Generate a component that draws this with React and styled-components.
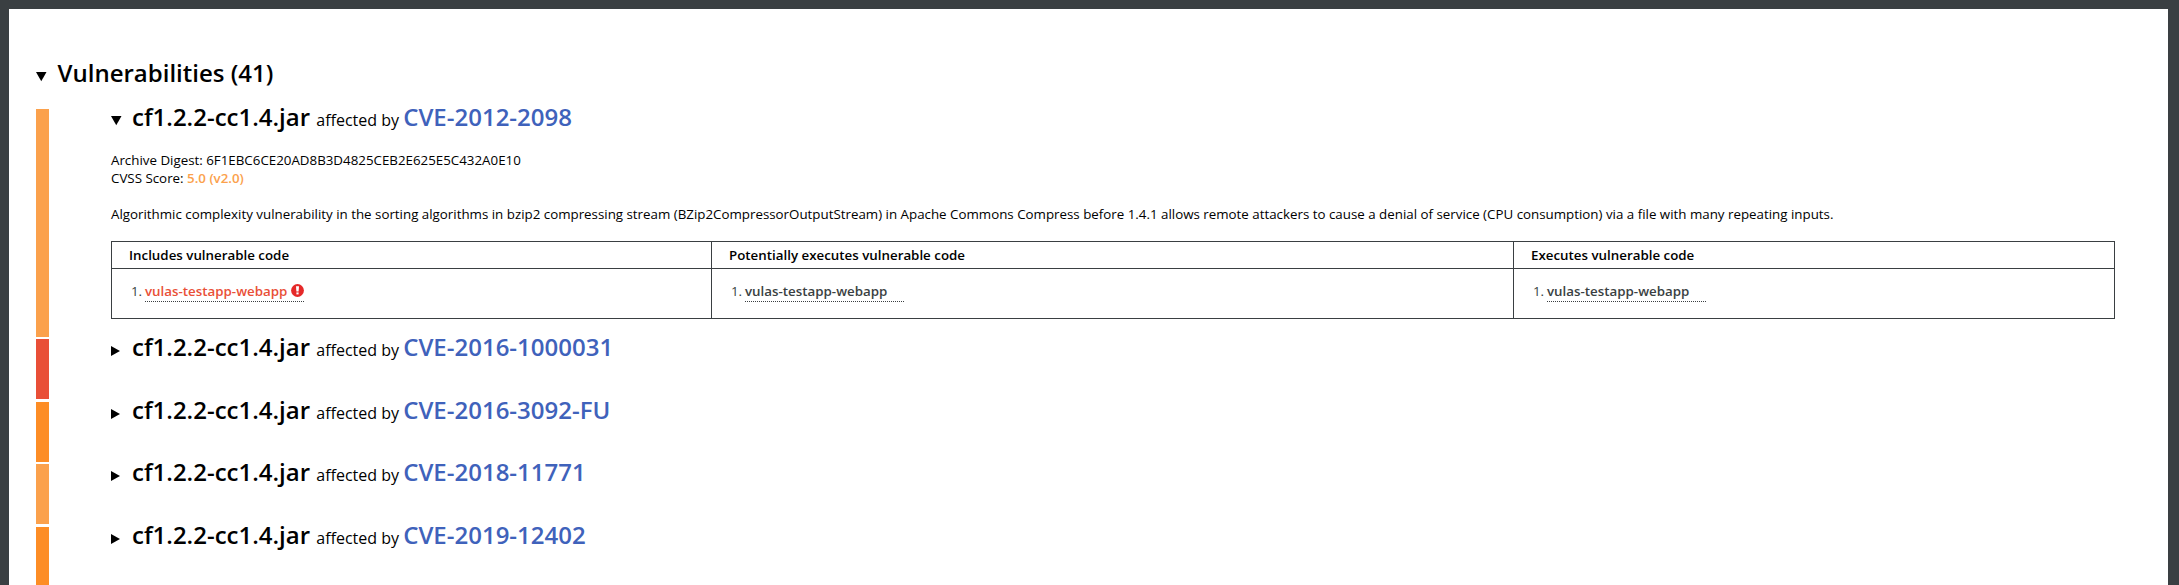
import React from "react";
import styled, { createGlobalStyle } from "styled-components";

const Global = createGlobalStyle`
  * { box-sizing: border-box; }
  body { margin: 0; overflow: hidden; background: #3a3f42; }
`;

const Frame = styled.div`
  height: 585px;
  padding: 9px 11px 0 9px;
  background: #3a3f42;
  font-family: "Open Sans", sans-serif;
  color: #000;
`;

const Page = styled.main`
  height: 576px;
  overflow: hidden;
  background: #fff;
  padding: 46px 53px 0 27px;
`;

const SectionHeader = styled.header`
  display: flex;
  height: 54.4px;
`;

const Marker = styled.svg`
  display: block;
  flex: none;
  width: 11px;
  height: 10px;
  margin-top: ${(p) => p.$top}px;
  margin-right: 10px;
`;

const Title = styled.h2`
  margin: 0 0 0 0.5px;
  font-size: 24px;
  font-weight: 600;
  line-height: 36px;
  white-space: nowrap;
`;

const List = styled.div`
  display: flex;
  flex-direction: column;
  gap: 2.5px;
`;

const Entry = styled.article`
  display: flex;
  height: ${(p) => p.$height}px;
  border-left: 13px solid ${(p) => p.$color};
  padding-left: 62px;
`;

const EntryBody = styled.div`
  flex: 1;
  min-width: 0;
`;

const EntryHeader = styled.div`
  display: flex;
  height: 36px;
  margin-top: -10px;
`;

const Heading = styled.h3`
  margin: 0;
  font-size: 24px;
  font-weight: 600;
  line-height: 36px;
  white-space: nowrap;
`;

const Affected = styled.span`
  font-size: 16px;
  font-weight: 400;
`;

const CveLink = styled.a`
  color: #3f62bb;
`;

const Details = styled.div`
  margin-top: 15.6px;
  font-size: 13.333px;
  line-height: 18px;
  white-space: nowrap;
`;

const Description = styled.p`
  margin: 18px 0;
`;

const Score = styled.span`
  color: #fba14c;
  font-weight: 600;
`;

const Table = styled.div`
  display: grid;
  grid-template-columns: 599px 802px 601px;
  width: 2004px;
  border: 1px solid #3a3f42;
`;

const Column = styled.section`
  & + & { border-left: 1px solid #3a3f42; }
`;

const ColumnTitle = styled.div`
  height: 27px;
  padding-left: 17px;
  border-bottom: 1px solid #3a3f42;
  font-weight: 600;
  line-height: 27px;
`;

const Apps = styled.div`
  display: flex;
  height: 49px;
  padding: 13px 0 0 19px;
  color: #3a3f42;
`;

const Index = styled.span`
  width: 14px;
  line-height: 18px;
`;

const AppLink = styled.a`
  display: flex;
  width: 159px;
  height: 20px;
  border-bottom: 1px dotted #3a3f42;
  color: ${(p) => (p.$alert ? "#e94f37" : "#3a3f42")};
  font-weight: 600;
  line-height: 18px;
`;

const AlertIcon = styled.svg`
  width: 13px;
  height: 13px;
  margin: 2px 0 0 auto;
`;

function Triangle({ open, top }) {
  return (
    <Marker $top={top} viewBox="0 0 11 10">
      <path d={open ? "M0 0H10.5L5.25 9.2Z" : "M0 0L9 5L0 10Z"} />
    </Marker>
  );
}

function Application({ alert }) {
  return (
    <Apps>
      <Index>1.</Index>
      <AppLink $alert={alert}>
        vulas-testapp-webapp
        {alert && (
          <AlertIcon viewBox="0 0 13 13">
            <circle cx="6.5" cy="6.5" r="6.4" fill="#e52929" />
            <path d="M5 2.3H8L7.6 7.4H5.4Z" fill="#fff" />
            <rect x="5.4" y="8.4" width="2.2" height="2" fill="#fff" />
          </AlertIcon>
        )}
      </AppLink>
    </Apps>
  );
}

function Vulnerability({ cve, color, height = 60, open, children }) {
  return (
    <Entry $color={color} $height={height}>
      <EntryBody>
        <EntryHeader>
          <Triangle open={open} top={17} />
          <Heading>
            cf1.2.2-cc1.4.jar <Affected>affected by </Affected>
            <CveLink>{cve}</CveLink>
          </Heading>
        </EntryHeader>
        {children}
      </EntryBody>
    </Entry>
  );
}

export default function App() {
  return (
    <Frame>
      <Global />
      <Page>
        <SectionHeader>
          <Triangle open top={17} />
          <Title>Vulnerabilities (41)</Title>
        </SectionHeader>
        <List>
          <Vulnerability cve="CVE-2012-2098" color="#fba14c" height={227.5} open>
            <Details>
              <div>Archive Digest: 6F1EBC6CE20AD8B3D4825CEB2E625E5C432A0E10</div>
              <div>CVSS Score: <Score>5.0 (v2.0)</Score></div>
              <Description>
                Algorithmic complexity vulnerability in the sorting algorithms in bzip2 compressing stream (BZip2CompressorOutputStream) in Apache Commons Compress before 1.4.1 allows remote attackers to cause a denial of service (CPU consumption) via a file with many repeating inputs.
              </Description>
              <Table>
                <Column>
                  <ColumnTitle>Includes vulnerable code</ColumnTitle>
                  <Application alert />
                </Column>
                <Column>
                  <ColumnTitle>Potentially executes vulnerable code</ColumnTitle>
                  <Application />
                </Column>
                <Column>
                  <ColumnTitle>Executes vulnerable code</ColumnTitle>
                  <Application />
                </Column>
              </Table>
            </Details>
          </Vulnerability>
          <Vulnerability cve="CVE-2016-1000031" color="#e94f37" />
          <Vulnerability cve="CVE-2016-3092-FU" color="#fd8d25" />
          <Vulnerability cve="CVE-2018-11771" color="#fba14c" />
          <Vulnerability cve="CVE-2019-12402" color="#fd8d25" />
        </List>
      </Page>
    </Frame>
  );
}
